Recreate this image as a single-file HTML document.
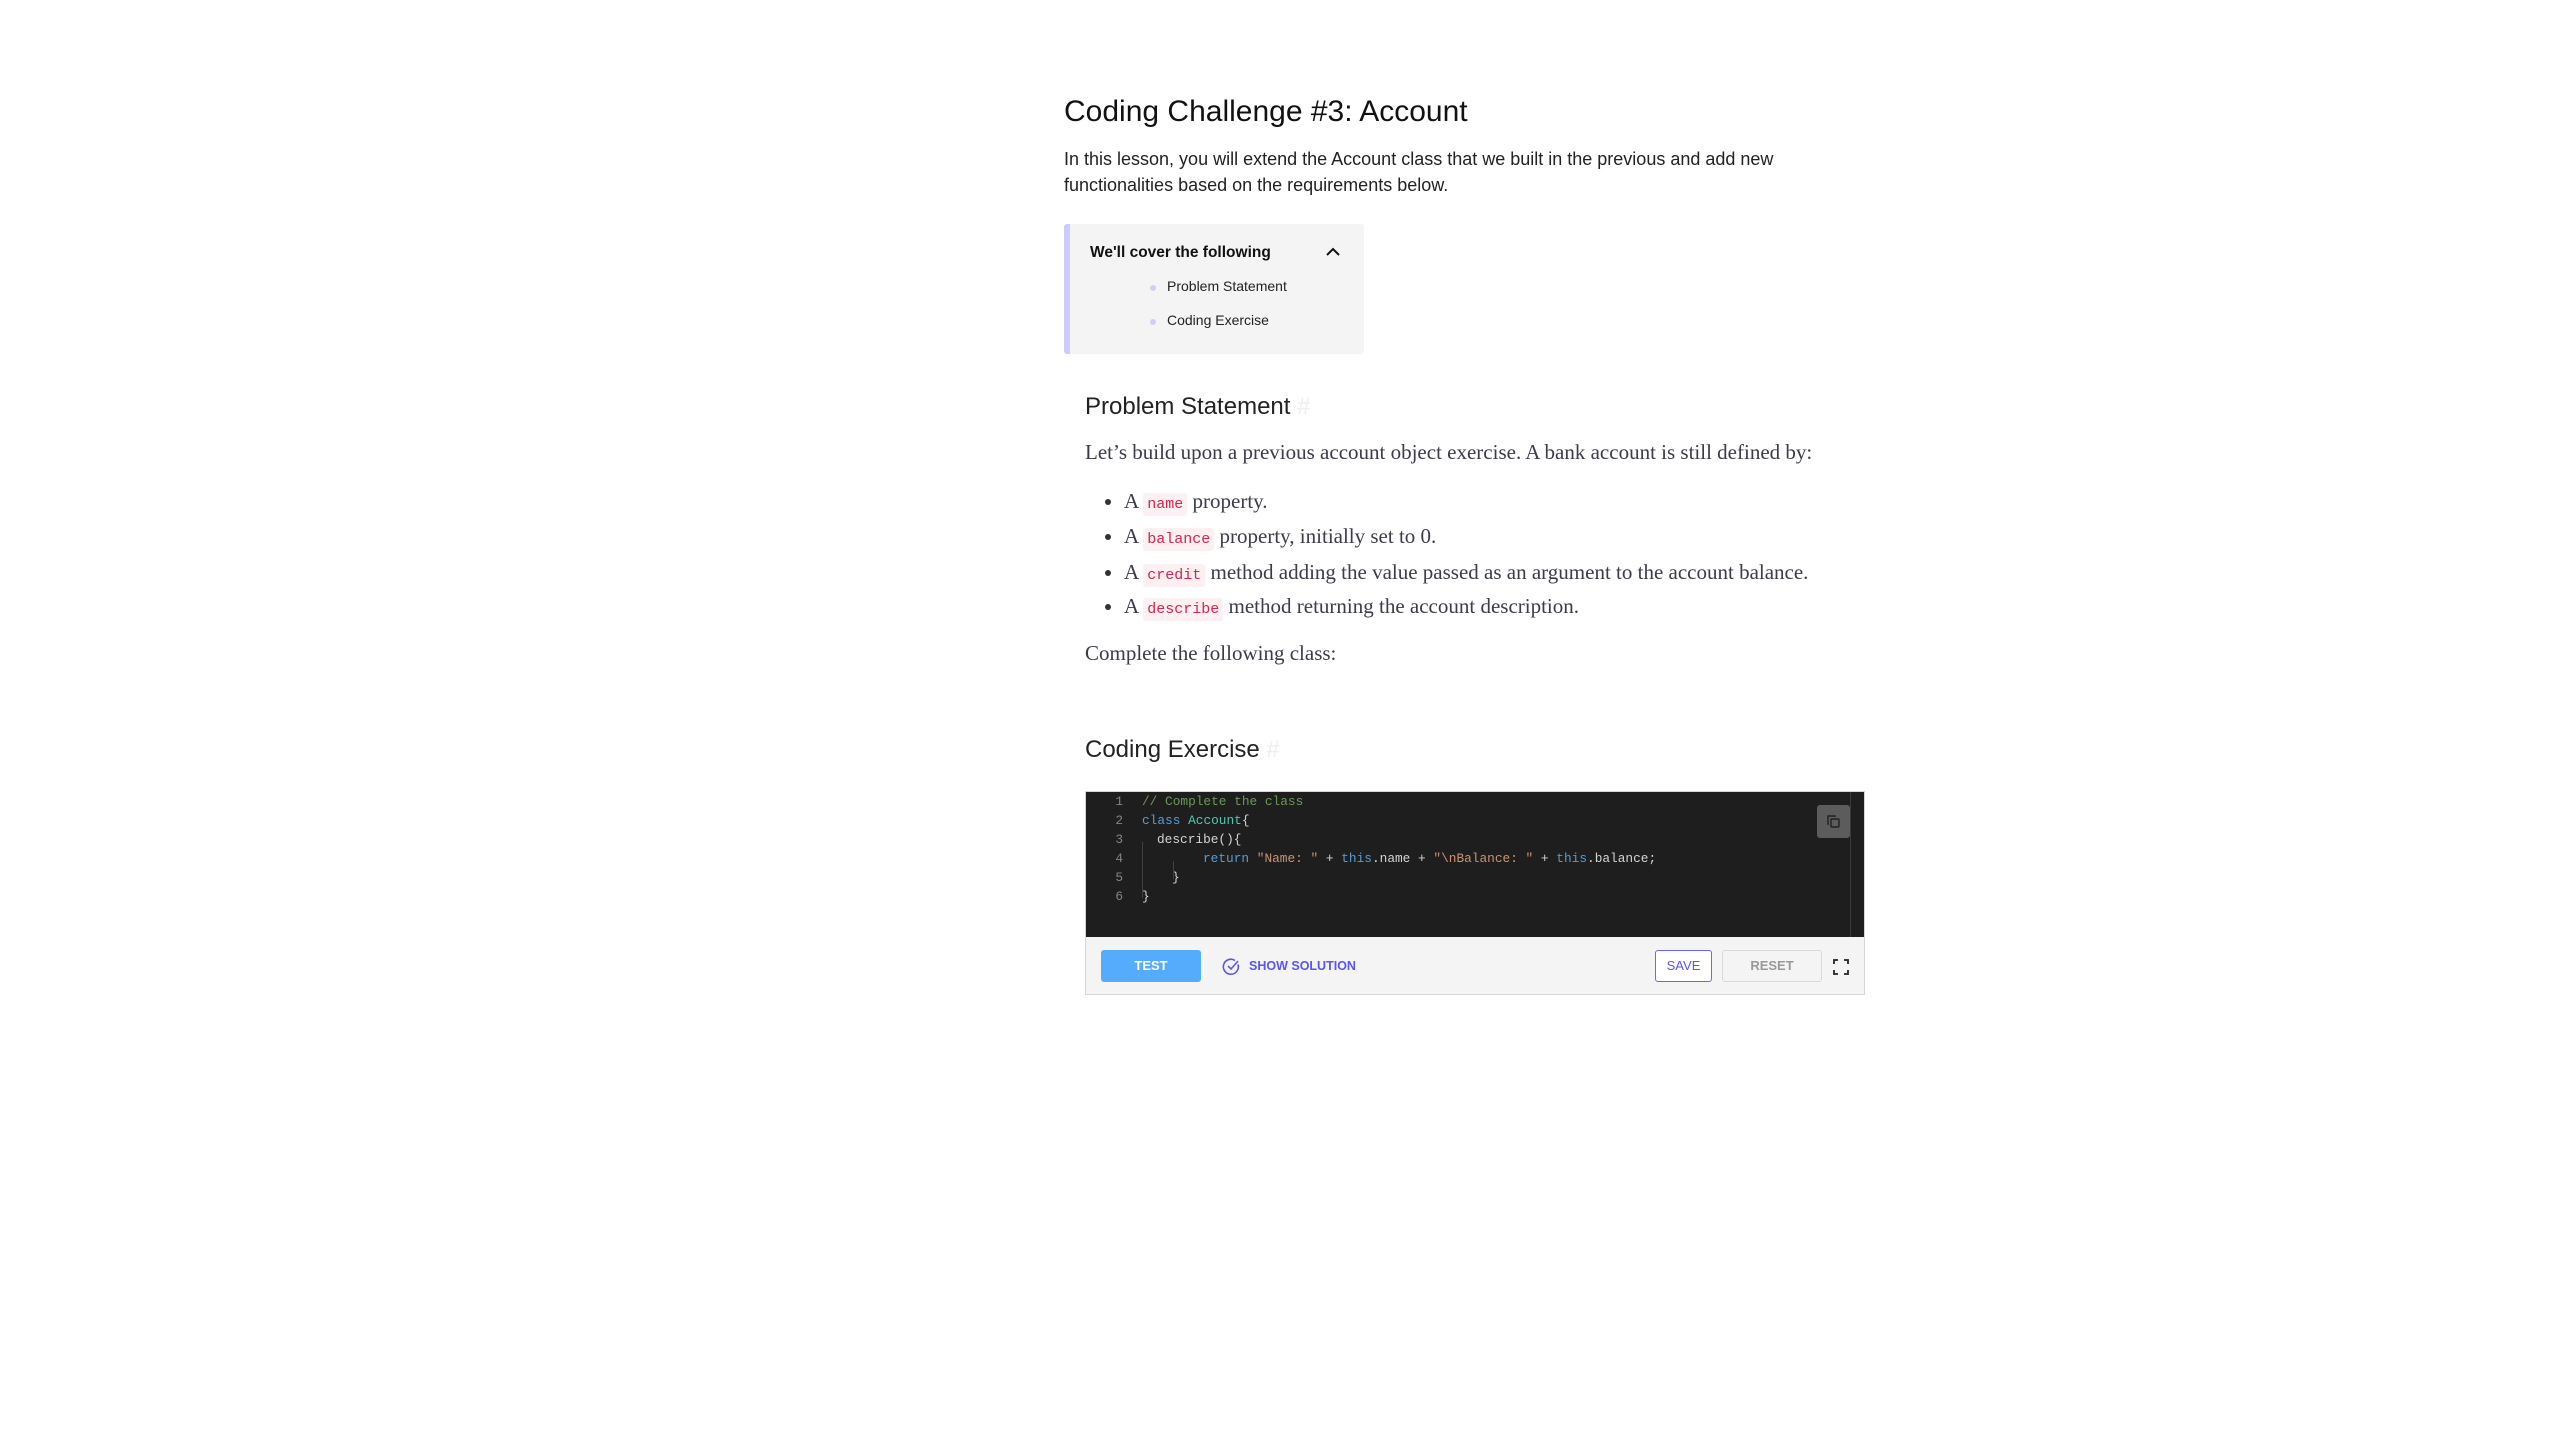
<!DOCTYPE html>
<html><head><meta charset="utf-8"><style>
*{margin:0;padding:0;box-sizing:border-box}
body{width:2560px;height:1440px;background:#fff;position:relative;font-family:"Liberation Sans",sans-serif;color:#111}
.a{position:absolute;white-space:nowrap}
.serif{font-family:"Liberation Serif",serif;color:#3b3b4a;font-size:21px}
code{font-family:"Liberation Mono",monospace;font-size:15px;color:#d6244c;background:#fcf0f2;border-radius:3px;padding:3px 4px}
.mono{font-family:"Liberation Mono",monospace;font-size:12.8px;color:#d4d4d4}
.ln{color:#858585;position:absolute;left:0;width:38px;text-align:right}
.cm{color:#6a9955}.kw{color:#569cd6}.cl{color:#4ec9b0}.st{color:#ce9178}
.dot{position:absolute;width:6px;height:6px;border-radius:50%}
</style></head><body>
<div class="a" style="left:1064px;top:95px;font-size:30px;color:#111">Coding Challenge #3: Account</div>
<div class="a" style="left:1064px;top:146px;font-size:18px;line-height:26px;color:#222">In this lesson, you will extend the Account class that we built in the previous and add new<br>functionalities based on the requirements below.</div>

<div class="a" style="left:1064px;top:224px;width:300px;height:130px;background:#f4f4f4;border-left:6px solid #cbcbff;border-radius:3px"></div>
<div class="a" style="left:1090px;top:244px;font-size:15.5px;font-weight:bold;color:#111">We'll cover the following</div>
<svg class="a" style="left:1325px;top:246px" width="16" height="12" viewBox="0 0 16 12"><path d="M2 9 L8 3 L14 9" fill="none" stroke="#111" stroke-width="2"/></svg>
<div class="dot" style="left:1150px;top:285px;background:#cfcff5"></div>
<div class="a" style="left:1167px;top:278px;font-size:14px;color:#222">Problem Statement</div>
<div class="dot" style="left:1150px;top:319px;background:#cfcff5"></div>
<div class="a" style="left:1167px;top:312px;font-size:14px;color:#222">Coding Exercise</div>

<div class="a" style="left:1085px;top:393px;font-size:24px;color:#222">Problem Statement <span style="color:#eee">#</span></div>
<div class="a serif" style="left:1085px;top:440px">Let’s build upon a previous account object exercise. A bank account is still defined by:</div>
<div class="dot" style="left:1105px;top:499px;background:#333"></div>
<div class="a serif" style="left:1124px;top:489px">A <code>name</code> property.</div>
<div class="dot" style="left:1105px;top:534px;background:#333"></div>
<div class="a serif" style="left:1124px;top:524px">A <code>balance</code> property, initially set to 0.</div>
<div class="dot" style="left:1105px;top:570px;background:#333"></div>
<div class="a serif" style="left:1124px;top:560px">A <code>credit</code> method adding the value passed as an argument to the account balance.</div>
<div class="dot" style="left:1105px;top:604px;background:#333"></div>
<div class="a serif" style="left:1124px;top:594px">A <code>describe</code> method returning the account description.</div>
<div class="a serif" style="left:1085px;top:641px">Complete the following class:</div>

<div class="a" style="left:1085px;top:736px;font-size:24px;color:#222">Coding Exercise <span style="color:#eee">#</span></div>

<div class="a" style="left:1085px;top:791px;width:780px;height:204px;border:1px solid #d6d6d6;background:#f4f4f4"></div>
<div class="a" style="left:1086px;top:792px;width:778px;height:145px;background:#1e1e1e"></div>
<div class="a" style="left:1850px;top:792px;width:1px;height:145px;background:#3a3a3a"></div>
<div class="a mono" style="left:1085px;top:792px;width:700px;height:140px;line-height:19px">
<div style="position:absolute;top:0"><span class="ln" style="left:0">1</span><span style="position:absolute;left:57px" class="cm">// Complete the class</span></div>
<div style="position:absolute;top:19px"><span class="ln">2</span><span style="position:absolute;left:57px"><span class="kw">class</span> <span class="cl">Account</span>{</span></div>
<div style="position:absolute;top:38px"><span class="ln">3</span><span style="position:absolute;left:72px">describe(){</span></div>
<div style="position:absolute;top:57px"><span class="ln">4</span><span style="position:absolute;left:118px"><span class="kw">return</span> <span class="st">"Name: "</span> + <span class="kw">this</span>.name + <span class="st">"\nBalance: "</span> + <span class="kw">this</span>.balance;</span></div>
<div style="position:absolute;top:76px"><span class="ln">5</span><span style="position:absolute;left:87px">}</span></div>
<div style="position:absolute;top:95px"><span class="ln">6</span><span style="position:absolute;left:57px">}</span></div>
<div style="position:absolute;left:57px;top:50px;width:1px;height:56px;background:#404040"></div>
<div style="position:absolute;left:88px;top:69px;width:1px;height:18px;background:#404040"></div>
</div>
<div class="a" style="left:1817px;top:805px;width:33px;height:33px;background:#5c5c5c;border-radius:3px"></div>
<svg class="a" style="left:1825px;top:813px" width="17" height="17" viewBox="0 0 17 17"><path d="M4 11 H3 V3 H10 V4" fill="none" stroke="#222" stroke-width="1.4"/><rect x="6" y="6" width="8" height="8" rx="1" fill="none" stroke="#222" stroke-width="1.4"/></svg>

<div class="a" style="left:1101px;top:950px;width:100px;height:32px;background:#55acfc;border-radius:3px;color:#fff;font-size:13px;font-weight:bold;text-align:center;line-height:32px">TEST</div>
<svg class="a" style="left:1222px;top:957px" width="19" height="19" viewBox="0 0 19 19"><path d="M16 7.5 A7.5 7.5 0 1 1 13 3.5" fill="none" stroke="#5a55f4" stroke-width="1.6"/><path d="M6 9 L9 12 L16 4" fill="none" stroke="#5a55f4" stroke-width="1.6"/></svg>
<div class="a" style="left:1249px;top:959px;font-size:12.5px;font-weight:bold;color:#5a55f4">SHOW SOLUTION</div>
<div class="a" style="left:1655px;top:950px;width:57px;height:32px;border:1px solid #6a66ff;border-radius:3px;background:#fff;color:#5a55f4;font-size:13px;text-align:center;line-height:30px">SAVE</div>
<div class="a" style="left:1722px;top:950px;width:100px;height:32px;border:1px solid #d8d8d8;border-radius:3px;color:#999;font-size:13px;font-weight:bold;text-align:center;line-height:30px">RESET</div>
<svg class="a" style="left:1833px;top:959px" width="16" height="16" viewBox="0 0 16 16"><path d="M1 5 V1 H5 M11 1 H15 V5 M15 11 V15 H11 M5 15 H1 V11" fill="none" stroke="#222" stroke-width="1.8"/></svg>
</body></html>
